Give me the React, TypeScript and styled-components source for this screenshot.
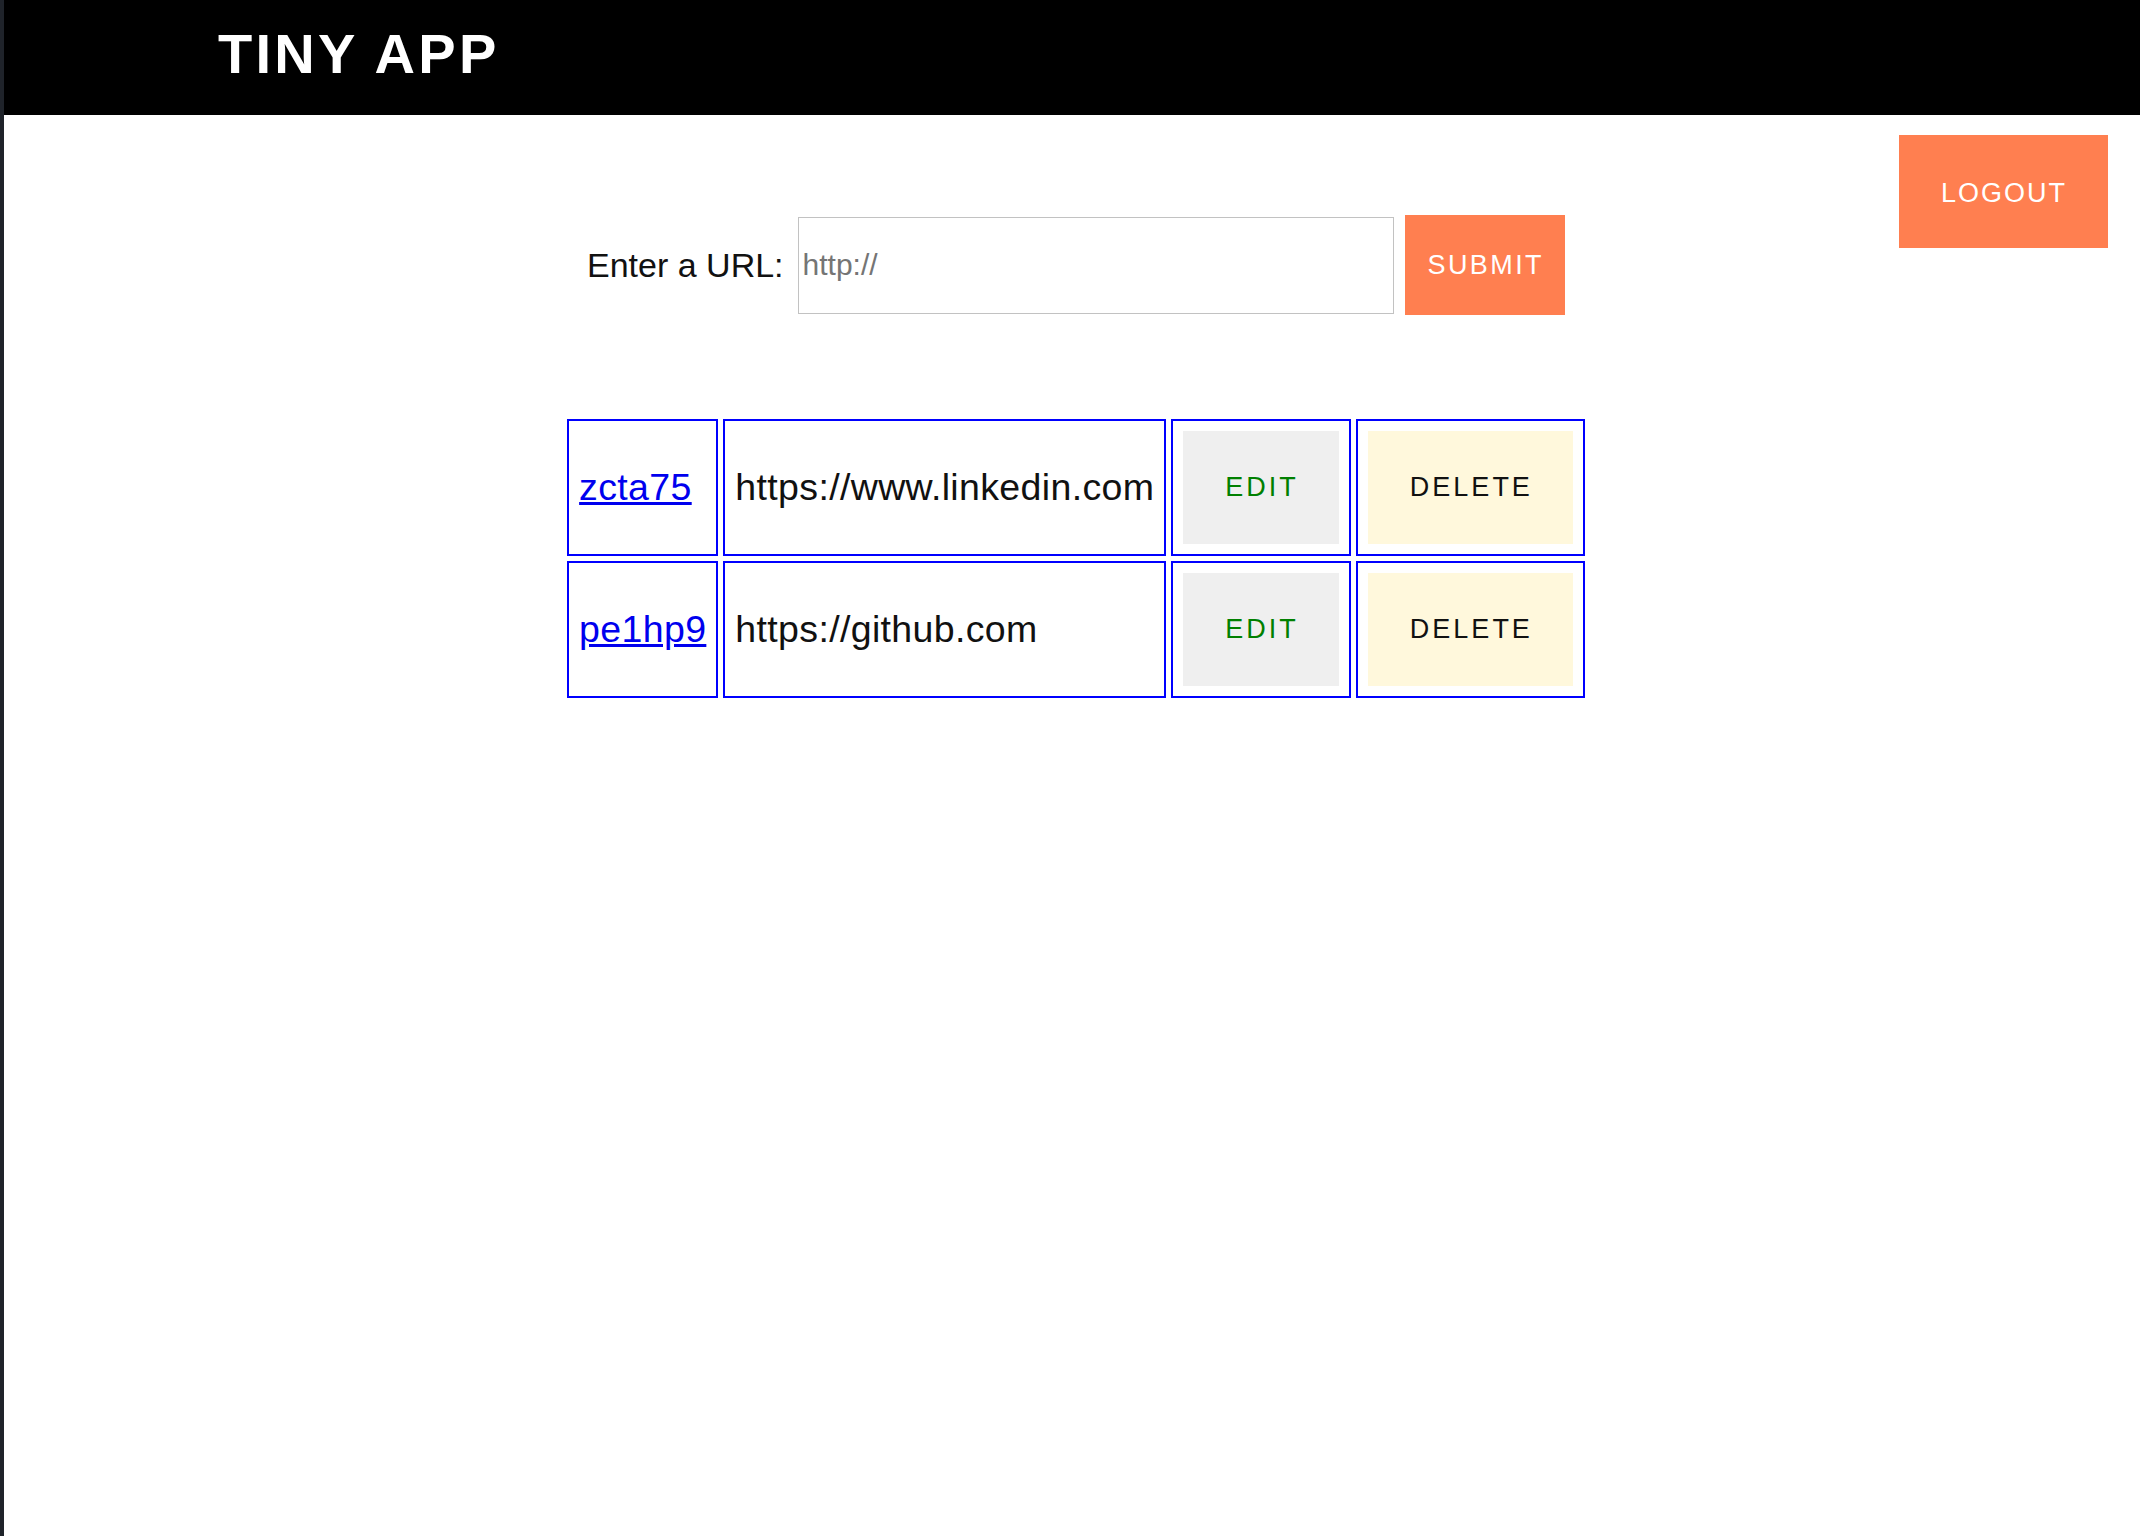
import React from "react";
import styled, { createGlobalStyle } from "styled-components";

const GlobalStyle = createGlobalStyle`
  html, body {
    margin: 0;
    padding: 0;
    background: #ffffff;
  }
  body {
    font-family: "Liberation Sans", Arial, sans-serif;
    color: #111111;
  }
`;

const Shell = styled.div`
  display: flex;
  min-height: 100vh;
`;

const EditorEdge = styled.div`
  width: 4px;
  flex-shrink: 0;
  background: #1f232a;
`;

const Page = styled.div`
  flex: 1;
  display: flex;
  flex-direction: column;
  min-width: 0;
`;

const Header = styled.header`
  height: 115px;
  box-sizing: border-box;
  background: #000000;
  padding: 26px 0 0 214px;
`;

const Title = styled.h1`
  margin: 0;
  font-size: 56px;
  line-height: 1;
  font-weight: 700;
  letter-spacing: 3.3px;
  color: #ffffff;
`;

const Main = styled.main`
  display: grid;
  grid-template-columns: 1fr auto 1fr;
  padding-left: 8px;
`;

const CoralButton = styled.button`
  border: none;
  background: #ff7f50;
  color: #ffffff;
  font-family: inherit;
  font-size: 27px;
  line-height: 1;
  cursor: pointer;
  display: flex;
  align-items: center;
  justify-content: center;
`;

const LogoutButton = styled(CoralButton)`
  grid-column: 3;
  grid-row: 1;
  justify-self: end;
  align-self: start;
  margin: 20px 32px 0 0;
  height: 113px;
  padding: 3px 41px 0 42px;
  letter-spacing: 2px;
`;

const UrlForm = styled.form`
  grid-column: 2;
  grid-row: 1;
  margin-top: 100px;
  display: flex;
  align-items: center;
`;

const Label = styled.label`
  font-size: 34px;
  color: #111111;
  margin-right: 14px;
`;

const UrlInput = styled.input`
  width: 596px;
  height: 97px;
  box-sizing: border-box;
  border: 1px solid #c2c2c2;
  padding: 0 4px;
  margin: 0 11px 0 0;
  font-family: inherit;
  font-size: 30px;
  color: #111111;
  outline: none;
  &::placeholder {
    color: #757575;
  }
`;

const SubmitButton = styled(CoralButton)`
  height: 100px;
  padding: 0 21px 0 23px;
  letter-spacing: 2.4px;
`;

const UrlTable = styled.table`
  grid-column: 1 / -1;
  grid-row: 2;
  justify-self: center;
  margin-top: 99px;
  border-collapse: separate;
  border-spacing: 5px;
`;

const Cell = styled.td`
  border: 2px solid #0000ff;
  padding: 10px 10px;
  vertical-align: middle;
  font-size: 37.5px;
  letter-spacing: 0.35px;
  color: #111111;
  white-space: nowrap;
`;

const ShortLink = styled.a`
  color: #0000ee;
  text-decoration: underline;
`;

const ActionButton = styled.button<{ $variant: "edit" | "delete" }>`
  height: 113px;
  padding: 0 40px 0 42px;
  border: none;
  font-family: inherit;
  font-size: 27px;
  line-height: 1;
  letter-spacing: 3px;
  cursor: pointer;
  background: ${(p) => (p.$variant === "edit" ? "#efefef" : "#fff8dc")};
  color: ${(p) => (p.$variant === "edit" ? "#008000" : "#111111")};
`;

const urls = [
  { id: "zcta75", long: "https://www.linkedin.com" },
  { id: "pe1hp9", long: "https://github.com" },
];

export default function App() {
  return (
    <>
      <GlobalStyle />
      <Shell>
        <EditorEdge />
        <Page>
          <Header>
            <Title>TINY APP</Title>
          </Header>
          <Main>
            <LogoutButton type="button">LOGOUT</LogoutButton>
            <UrlForm onSubmit={(e) => e.preventDefault()}>
              <Label htmlFor="longURL">Enter a URL:</Label>
              <UrlInput id="longURL" type="text" placeholder="http://" />
              <SubmitButton type="submit">SUBMIT</SubmitButton>
            </UrlForm>
            <UrlTable>
              <tbody>
                {urls.map((u) => (
                  <tr key={u.id}>
                    <Cell>
                      <ShortLink href={`#/u/${u.id}`}>{u.id}</ShortLink>
                    </Cell>
                    <Cell>{u.long}</Cell>
                    <Cell>
                      <ActionButton $variant="edit" type="button">EDIT</ActionButton>
                    </Cell>
                    <Cell>
                      <ActionButton $variant="delete" type="button">DELETE</ActionButton>
                    </Cell>
                  </tr>
                ))}
              </tbody>
            </UrlTable>
          </Main>
        </Page>
      </Shell>
    </>
  );
}
